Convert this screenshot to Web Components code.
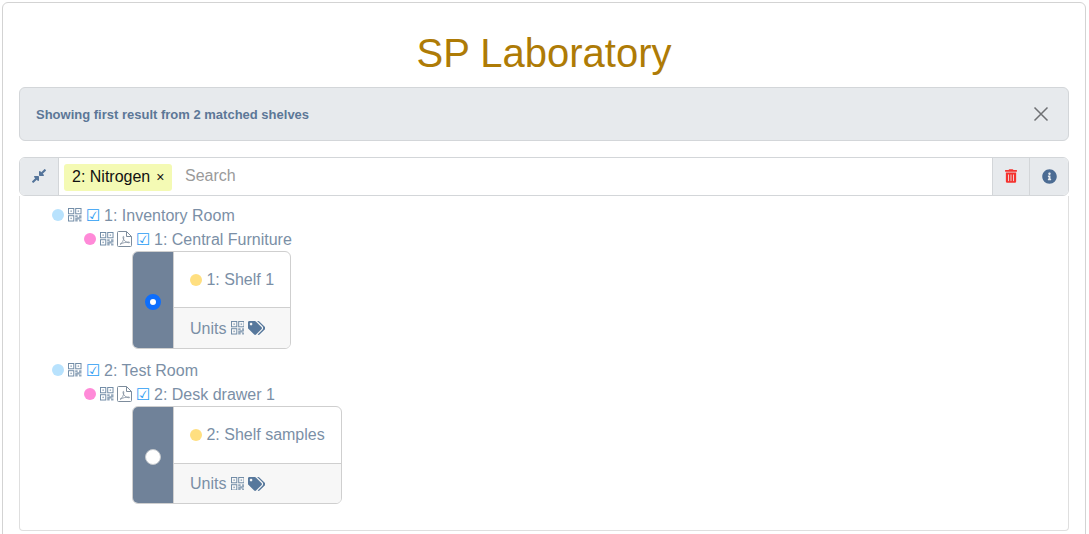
<!DOCTYPE html>
<html lang="en">
<head>
<meta charset="utf-8">
<title>SP Laboratory</title>
<style>
  html, body { margin: 0; height: 100%; overflow: hidden; background: #fff; }
  body { font-family: "Liberation Sans", Arial, sans-serif; font-size: 16px; }
</style>
</head>
<body>
<lab-page>
  <lab-alert slot="alert">Showing first result from 2 matched shelves</lab-alert>
  <lab-search slot="search"></lab-search>
  <tree-row slot="tree" depth="0" dot="#b8e2fd" label="1: Inventory Room"></tree-row>
  <tree-row slot="tree" depth="1" dot="#ff8ad8" label="1: Central Furniture" pdf></tree-row>
  <shelf-card slot="tree" label="1: Shelf 1" split="56" nudge="1" checked></shelf-card>
  <tree-row slot="tree" depth="0" dot="#b8e2fd" label="2: Test Room" style="margin-top:9px"></tree-row>
  <tree-row slot="tree" depth="1" dot="#ff8ad8" label="2: Desk drawer 1" pdf></tree-row>
  <shelf-card slot="tree" label="2: Shelf samples" split="57" nudge="0"></shelf-card>
</lab-page>

<script>
const ICONS = {
  compress: ['0 0 448 512', '<path fill="currentColor" d="M4.686 427.314L104 328l-32.922-31.029C55.958 281.851 66.666 256 88.048 256h112C213.303 256 224 266.745 224 280v112c0 21.382-25.803 32.09-40.922 16.971L152 376l-99.314 99.314c-6.248 6.248-16.379 6.248-22.627 0L4.686 449.941c-6.248-6.248-6.248-16.379 0-22.627zM443.314 84.686L344 184l32.922 31.029c15.12 15.12 4.412 40.971-16.97 40.971h-112C234.697 256 224 245.255 224 232V120c0-21.382 25.803-32.09 40.922-16.971L296 136l99.314-99.314c6.248-6.248 16.379-6.248 22.627 0l25.373 25.373c6.248 6.248 6.248 16.379 0 22.627z"/>'],
  trash: ['0 0 448 512', '<path fill="currentColor" d="M32 464a48 48 0 0 0 48 48h288a48 48 0 0 0 48-48V128H32zm272-256a16 16 0 0 1 32 0v224a16 16 0 0 1-32 0zm-96 0a16 16 0 0 1 32 0v224a16 16 0 0 1-32 0zm-96 0a16 16 0 0 1 32 0v224a16 16 0 0 1-32 0zM432 32H312l-9.4-18.7A24 24 0 0 0 281.1 0H166.8a23.72 23.72 0 0 0-21.4 13.3L136 32H16A16 16 0 0 0 0 48v32a16 16 0 0 0 16 16h416a16 16 0 0 0 16-16V48a16 16 0 0 0-16-16z"/>'],
  info: ['0 0 512 512', '<path fill="currentColor" d="M256 8C119.043 8 8 119.083 8 256c0 136.997 111.043 248 248 248s248-111.003 248-248C504 119.083 392.957 8 256 8zm0 110c23.196 0 42 18.804 42 42s-18.804 42-42 42-42-18.804-42-42 18.804-42 42-42zm56 254c0 6.627-5.373 12-12 12h-88c-6.627 0-12-5.373-12-12v-24c0-6.627 5.373-12 12-12h12v-64h-12c-6.627 0-12-5.373-12-12v-24c0-6.627 5.373-12 12-12h64c6.627 0 12 5.373 12 12v100h12c6.627 0 12 5.373 12 12v24z"/>'],
  tags: ['0 0 640 512', '<path fill="currentColor" d="M497.941 225.941L286.059 14.059A48 48 0 0 0 252.118 0H48C21.49 0 0 21.49 0 48v204.118a48 48 0 0 0 14.059 33.941l211.882 211.882c18.744 18.745 49.136 18.746 67.882 0l204.118-204.118c18.745-18.745 18.745-49.137 0-67.882zM112 160c-26.51 0-48-21.49-48-48s21.49-48 48-48 48 21.49 48 48-21.49 48-48 48zm513.941 133.823L421.823 497.941c-18.745 18.745-49.137 18.745-67.882 0l-.36-.36L527.64 323.522c16.999-16.999 26.36-39.6 26.36-63.64s-9.362-46.641-26.36-63.64L331.397 0h48.721a48 48 0 0 1 33.941 14.059l211.882 211.882c18.745 18.745 18.745 49.137 0 67.882z"/>'],
  qr: ['0 0 14 14', '<g fill="none" stroke="currentColor"><rect x=".5" y=".5" width="5.500" height="5.500"/><rect x="8" y=".5" width="5.500" height="5.500"/><rect x=".5" y="8" width="5.500" height="5.500"/></g><g fill="currentColor" opacity=".75"><rect x="2.500" y="2.500" width="1.500" height="1.500"/><rect x="10" y="2.500" width="1.500" height="1.500"/><rect x="2.500" y="10" width="1.500" height="1.500"/><path d="M7.500 7.500h2.500v2h1.500v-2h2.500v3.500h-2v1h2v2h-2.500v-2h-1.500v2H7.500v-4h2v-.5h-2z"/></g>'],
  pdf: ['0 0 15 16', '<path fill="none" stroke="currentColor" d="M.5 1.500a1 1 0 0 1 1-1h8l5 5v9a1 1 0 0 1-1 1h-12a1 1 0 0 1-1-1zM9.500.5v5h5"/><path fill="none" stroke="currentColor" stroke-width=".8" d="M3 13.300c2-.8 3.800-4 3.800-7.200 0-1-.8-1-.8 0 0 2.800 3 5.500 6 5.700.8 0 .8-.8 0-.8-3 0-6 .8-9 2.300z"/>']
}

class LabIcon extends HTMLElement {
  connectedCallback() {
    const [box, body] = ICONS[this.getAttribute('name')]
    const w = this.getAttribute('w') || 16
    const h = this.getAttribute('h') || 16
    this.attachShadow({ mode: 'open' }).innerHTML = `
      <style>:host { display: inline-flex; flex: none; } svg { display: block; }</style>
      <svg width="${w}" height="${h}" viewBox="${box}">${body}</svg>`
  }
}
customElements.define('lab-icon', LabIcon)

class LabPage extends HTMLElement {
  constructor() {
    super()
    this.attachShadow({ mode: 'open' }).innerHTML = `
      <style>
        :host {
          display: block;
          margin: 2px 3px 0 2px;
          padding: 0 16px 16px;
          border: 1px solid #d3d3d3;
          border-radius: 6px;
          background: #fff;
        }
        h1 {
          margin: 0;
          padding-top: 26px;
          height: 58px;
          font-size: 40px;
          line-height: 48px;
          font-weight: 400;
          text-align: center;
          color: #ae7b06;
        }
        .tree {
          border: 1px solid #dfdfdf;
          border-top: 0;
          border-radius: 0 0 4px 4px;
          padding: 7px 0 26px;
          height: 301px;
        }
      </style>
      <h1>SP Laboratory</h1>
      <slot name="alert"></slot>
      <slot name="search"></slot>
      <div class="tree"><slot name="tree"></slot></div>`
  }
}
customElements.define('lab-page', LabPage)

class LabAlert extends HTMLElement {
  constructor() {
    super()
    this.attachShadow({ mode: 'open' }).innerHTML = `
      <style>
        :host {
          display: flex;
          align-items: center;
          justify-content: space-between;
          height: 54px;
          box-sizing: border-box;
          margin-bottom: 16px;
          padding: 0 19px 0 16px;
          background: #e7eaed;
          border: 1px solid #d3d6d9;
          border-radius: 6px;
          color: #5c7797;
          font-size: 13px;
          font-weight: 700;
        }
        svg { display: block; }
      </style>
      <span><slot></slot></span>
      <svg width="16" height="16" viewBox="0 0 16 16" role="img" aria-label="Close">
        <path d="M1.500 1.500l13 13M14.500 1.500l-13 13" stroke="#6e7073" stroke-width="1.500" fill="none"/>
      </svg>`
  }
}
customElements.define('lab-alert', LabAlert)

class LabSearch extends HTMLElement {
  constructor() {
    super()
    this.attachShadow({ mode: 'open' }).innerHTML = `
      <style>
        :host {
          display: flex;
          height: 39px;
          box-sizing: border-box;
          border: 1px solid #d3d6d9;
          border-radius: 6px;
          overflow: hidden;
        }
        .addon {
          flex: none;
          display: flex;
          align-items: center;
          justify-content: center;
          box-sizing: border-box;
          background: #e7eaed;
          color: #54749a;
        }
        .collapse { width: 39px; border-right: 1px solid #d3d6d9; padding-bottom: 1px; }
        .del { width: 37px; border-left: 1px solid #d3d6d9; padding-bottom: 1px; color: #f5332f; }
        .info { width: 39px; border-left: 1px solid #d3d6d9; color: #4c6c93; }
        .field { flex: 1; display: flex; align-items: center; padding-left: 5px; gap: 12.500px; }
        .tag {
          display: flex;
          align-items: center;
          height: 27px;
          margin-top: 1px;
          padding: 0 8px;
          gap: 6px;
          border-radius: 3px;
          background: #f4fab4;
          color: #111;
        }
        .tag i { font-style: normal; font-size: 14px; }
        input {
          flex: 1;
          border: 0;
          outline: 0;
          padding: 0 0 2px;
          font: inherit;
          background: transparent;
        }
        input::placeholder { color: #9a9a9a; opacity: 1; }
      </style>
      <div class="addon collapse"><lab-icon name="compress" w="14" h="16"></lab-icon></div>
      <div class="field">
        <span class="tag">2: Nitrogen <i>×</i></span>
        <input placeholder="Search">
      </div>
      <div class="addon del"><lab-icon name="trash" w="12" h="14"></lab-icon></div>
      <div class="addon info"><lab-icon name="info" w="15" h="15"></lab-icon></div>`
  }
}
customElements.define('lab-search', LabSearch)

class TreeRow extends HTMLElement {
  connectedCallback() {
    const depth = +this.getAttribute('depth')
    const pdf = this.hasAttribute('pdf')
    this.attachShadow({ mode: 'open' }).innerHTML = `
      <style>
        :host {
          display: flex;
          align-items: center;
          height: 24px;
          padding-left: ${32 + depth * 32}px;
          color: #7b8fa6;
          white-space: nowrap;
        }
        .dot { width: 12px; height: 12px; border-radius: 50%; background: ${this.getAttribute('dot')}; margin-right: 4px; }
        lab-icon { color: #6f8aa5; }
        .qr { margin-right: ${pdf ? 3.5 : 4.5}px; }
        .pdf { margin-right: 4px; color: #7d8c9c; }
        .check { color: #2a9df4; margin-right: 5px; padding-top: 2px; font-family: "DejaVu Sans", sans-serif; font-size: 16px; line-height: 16px; width: 13px; }
        .label { padding-top: 2px; }
      </style>
      <span class="dot"></span>
      <lab-icon class="qr" name="qr" w="13.500" h="13.500"></lab-icon>
      ${pdf ? '<lab-icon class="pdf" name="pdf" w="15" h="16"></lab-icon>' : ''}
      <span class="check">☑</span>
      <span class="label">${this.getAttribute('label')}</span>`
  }
}
customElements.define('tree-row', TreeRow)

class ShelfCard extends HTMLElement {
  connectedCallback() {
    const checked = this.hasAttribute('checked')
    const split = this.getAttribute('split')
    const nudge = this.getAttribute('nudge')
    this.attachShadow({ mode: 'open' }).innerHTML = `
      <style>
        :host {
          display: flex;
          width: fit-content;
          height: 98px;
          box-sizing: border-box;
          margin-left: 112px;
          border: 1px solid #cfcfcf;
          border-radius: 6px;
          overflow: hidden;
          color: #7b8fa6;
          white-space: nowrap;
        }
        .side {
          flex: none;
          width: 41px;
          box-sizing: border-box;
          padding-top: 3px;
          display: flex;
          align-items: center;
          justify-content: center;
          background: #708299;
          border-right: 1px solid #cfcfcf;
        }
        .radio { width: 16px; height: 16px; border-radius: 50%; background: #fff; box-sizing: border-box; border: ${checked ? '5px solid #0d6efd' : '1px solid #c4c8cc'}; }
        .body { display: flex; flex-direction: column; flex: 1; }
        .name { height: ${split}px; box-sizing: border-box; display: flex; align-items: center; padding: ${nudge}px 16px 0; border-bottom: 1px solid #cfcfcf; gap: 4.450px; }
        .dot { width: 12px; height: 12px; margin-top: -1px; border-radius: 50%; background: #ffdf80; }
        .units { flex: 1; display: flex; align-items: center; padding: 0 16px; background: #f7f7f7; gap: 4.450px; }
        .units span { padding-top: 1px; }
        .units .qr { margin-right: -1px; }
        lab-icon { color: #6f8aa5; }
        .tags { color: #57789c; }
      </style>
      <div class="side"><span class="radio"></span></div>
      <div class="body">
        <div class="name"><span class="dot"></span><span>${this.getAttribute('label')}</span></div>
        <div class="units"><span>Units</span><lab-icon class="qr" name="qr" w="13.500" h="13.500"></lab-icon><lab-icon class="tags" name="tags" w="17.500" h="14"></lab-icon></div>
      </div>`
  }
}
customElements.define('shelf-card', ShelfCard)
</script>
</body>
</html>
